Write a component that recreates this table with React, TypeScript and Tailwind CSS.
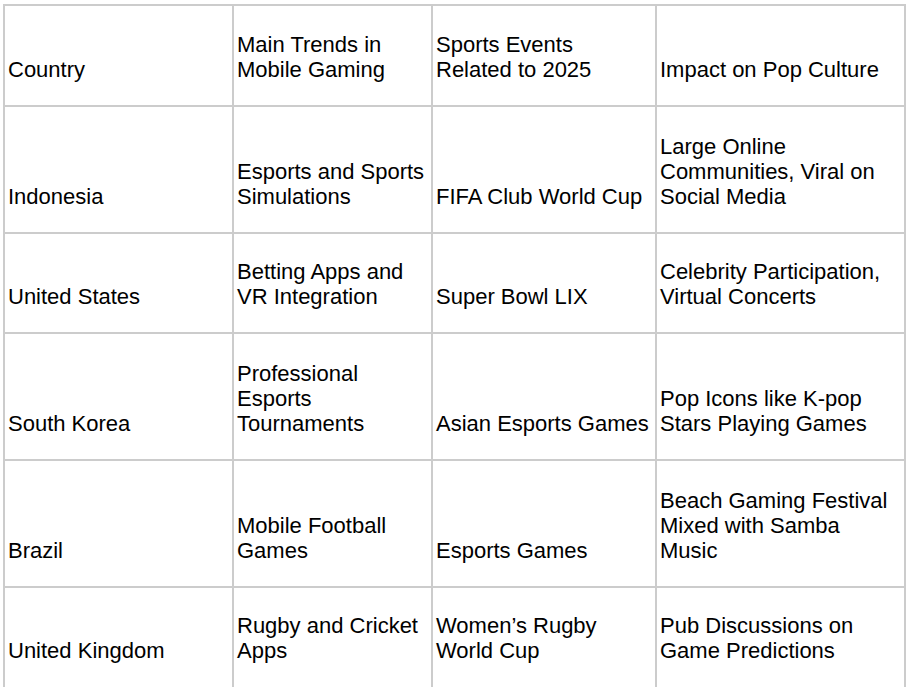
const rows: { h: string; cells: string[] }[] = [
  { h: 'h-[101px] border-b-2 pb-[23px]', cells: ['Country', 'Main Trends in\nMobile Gaming', 'Sports Events\nRelated to 2025', 'Impact on Pop Culture'] },
  { h: 'h-[127px] border-b-2 pb-[23px]', cells: ['Indonesia', 'Esports and Sports\nSimulations', 'FIFA Club World Cup', 'Large Online\nCommunities, Viral on\nSocial Media'] },
  { h: 'h-[100px] border-b-2 pb-[23px]', cells: ['United States', 'Betting Apps and\nVR Integration', 'Super Bowl LIX', 'Celebrity Participation,\nVirtual Concerts'] },
  { h: 'h-[127px] border-b-2 pb-[23px]', cells: ['South Korea', 'Professional\nEsports\nTournaments', 'Asian Esports Games', 'Pop Icons like K-pop\nStars Playing Games'] },
  { h: 'h-[127px] border-b-2 pb-[23px]', cells: ['Brazil', 'Mobile Football\nGames', 'Esports Games', 'Beach Gaming Festival\nMixed with Samba\nMusic'] },
  { h: 'h-[100px] pb-[25px]', cells: ['United Kingdom', 'Rugby and Cricket\nApps', 'Women\u2019s Rugby\nWorld Cup', 'Pub Discussions on\nGame Predictions'] },
];

export default function App() {
  return (
    <div className="h-[687px] overflow-hidden bg-white pl-[3px] pt-[4px]">
      <div
        className="grid w-[903px] grid-cols-[229px_199px_224px_249px] border-l-2 border-t-2 border-[#cccccc] text-[22px] leading-[25px] text-black"
        style={{ fontFamily: '"Liberation Sans", Arial, sans-serif' }}
      >
        {rows.map((row, i) =>
          row.cells.map((text, j) => (
            <div
              key={`${i}-${j}`}
              className={`${row.h} flex flex-col justify-end overflow-hidden border-r-2 border-[#cccccc] pl-[3px]`}
            >
              <p className="whitespace-pre">{text}</p>
            </div>
          ))
        )}
      </div>
    </div>
  );
}
